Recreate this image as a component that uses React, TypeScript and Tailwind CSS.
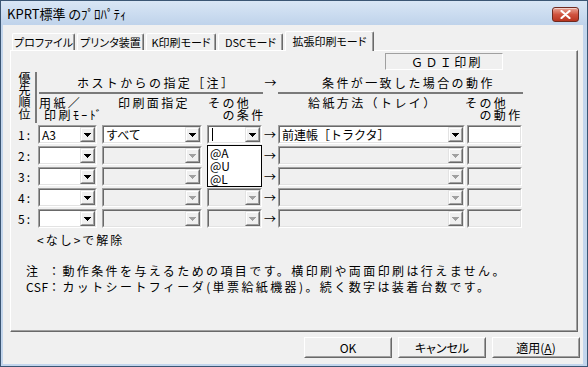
import React from "react";

const F = "font-['Noto_Sans_CJK_JP','Noto_Sans',sans-serif]";

function DropArrow({ disabled }: { disabled?: boolean }) {
  const c = disabled ? "#a0a0a0" : "#000000";
  return (
    <svg width="7" height="4" viewBox="0 0 7 4" shapeRendering="crispEdges">
      <rect x="0" y="0" width="7" height="1" fill={c} />
      <rect x="1" y="1" width="5" height="1" fill={c} />
      <rect x="2" y="2" width="3" height="1" fill={c} />
      <rect x="3" y="3" width="1" height="1" fill={c} />
    </svg>
  );
}

function Sunken({
  className,
  bg,
  children,
}: {
  className: string;
  bg: string;
  children?: React.ReactNode;
}) {
  return (
    <div
      className={`flex border border-t-[#a0a0a0] border-l-[#a0a0a0] border-r-white border-b-white ${className}`}
    >
      <div
        className={`flex min-w-0 flex-1 border border-t-[#696969] border-l-[#696969] border-r-[#e3e3e3] border-b-[#e3e3e3] ${bg}`}
      >
        {children}
      </div>
    </div>
  );
}

function DropBtn({ disabled }: { disabled?: boolean }) {
  return (
    <div className="flex h-full w-[15px] border border-t-[#e3e3e3] border-l-[#e3e3e3] border-r-[#696969] border-b-[#696969] bg-[#f0f0f0]">
      <div className="flex flex-1 items-center justify-center border border-t-white border-l-white border-r-[#a0a0a0] border-b-[#a0a0a0]">
        <DropArrow disabled={disabled} />
      </div>
    </div>
  );
}

function Combo({
  w,
  value,
  enabled,
  arrowEnabled,
  children,
}: {
  w: string;
  value?: React.ReactNode;
  enabled?: boolean;
  arrowEnabled?: boolean;
  children?: React.ReactNode;
}) {
  return (
    <div className={`relative ${w}`}>
      <Sunken className="h-[19px] w-full" bg={enabled ? "bg-white" : "bg-[#f0f0f0]"}>
        <div className="min-w-0 flex-1 overflow-hidden whitespace-nowrap pl-[2px] text-[12px] leading-[15px] text-black">
          {value}
        </div>
        <DropBtn disabled={!arrowEnabled} />
      </Sunken>
      {children}
    </div>
  );
}

function RowArrow() {
  return (
    <div className="w-[16px] text-center text-[12px] leading-[19px] text-black">→</div>
  );
}

function Row({ n, first }: { n: number; first?: boolean }) {
  return (
    <div className="flex h-[19px] items-center">
      <div className="w-[27px] pl-[7px] text-[12px] leading-[19px] tracking-[2px] text-black">
        {n}:
      </div>
      <Combo w="w-[59px]" enabled arrowEnabled value={first ? "A3" : ""} />
      <div className="ml-[5px]">
        <Combo w="w-[100px]" enabled={first} arrowEnabled={first} value={first ? "すべて" : ""} />
      </div>
      <div className="ml-[5px]">
        {first ? (
          <Combo
            w="w-[55px]"
            enabled
            arrowEnabled
            value={<span className="ml-[1px] mt-[1px] inline-block h-[13px] w-[1px] bg-black align-top" />}
          >
            <div className="absolute left-0 top-[20px] z-20 h-[42px] w-[55px] whitespace-pre border border-black bg-white pl-[2px] text-[12px] leading-[13px] text-black">
              {"@A\n@U\n@L"}
            </div>
          </Combo>
        ) : (
          <Combo w="w-[55px]" />
        )}
      </div>
      <RowArrow />
      <Combo
        w="w-[187px]"
        enabled={first}
        arrowEnabled={first}
        value={first ? "前連帳［トラクタ］" : ""}
      />
      <div className="ml-[2px]">
        <Sunken className="h-[19px] w-[55px]" bg={first ? "bg-white" : "bg-[#f0f0f0]"} />
      </div>
    </div>
  );
}

function PushButton({ children }: { children: React.ReactNode }) {
  return (
    <div className="flex h-[21px] w-[88px] border border-t-white border-l-white border-r-[#696969] border-b-[#696969] bg-[#f0f0f0]">
      <div className="flex flex-1 items-center justify-center border border-t-[#f0f0f0] border-l-[#f0f0f0] border-r-[#a0a0a0] border-b-[#a0a0a0] text-[12px] leading-[15px] text-black">
        {children}
      </div>
    </div>
  );
}

function Tab({ w, label, selected }: { w: string; label: string; selected?: boolean }) {
  if (selected) {
    return (
      <div
        className={`relative z-10 -mb-[1px] h-[20px] ${w} whitespace-nowrap rounded-t-[2px] border-l border-t border-r border-l-white border-t-white border-r-[#696969] bg-[#f0f0f0] pt-[4px] text-center text-[11px] leading-[11px] text-black shadow-[inset_-1px_0_0_#a0a0a0] [font-feature-settings:'palt']`}
      >
        {label}
      </div>
    );
  }
  return (
    <div
      className={`h-[17px] ${w} whitespace-nowrap rounded-t-[2px] border-l border-t border-r border-l-white border-t-white border-r-[#696969] bg-[#f0f0f0] pt-[3px] text-center text-[11px] leading-[11px] text-black shadow-[inset_-1px_0_0_#a0a0a0] [font-feature-settings:'palt']`}
    >
      {label}
    </div>
  );
}

export default function App() {
  return (
    <div
      className={`${F} flex h-[367px] w-[588px] flex-col overflow-hidden border border-[#3b5674] bg-[#c3d6ed] text-black`}
    >
      {/* Title bar */}
      <div className="flex h-[24px] shrink-0 items-start bg-gradient-to-b from-[#d9e6f5] to-[#bfd3eb]">
        <span className="ml-[6px] mt-[6px] text-[13px] leading-[13px] text-black [font-feature-settings:'palt']">
          KPRT標準 のﾌﾟﾛﾊﾟﾃｨ
        </span>
        <div className="ml-auto mr-[8px] mt-[6px] flex h-[15px] w-[27px] items-center justify-center rounded-[3px] border border-[#6f2a20] bg-gradient-to-b from-[#e8a597] via-[#d0533f] to-[#b8341f] shadow-[inset_0_1px_0_rgba(255,255,255,0.5)]">
          <svg width="11" height="9" viewBox="0 0 11 9">
            <path d="M1.5 1 L9.5 8 M9.5 1 L1.5 8" stroke="#ffffff" strokeWidth="2.2" strokeLinecap="round" />
          </svg>
        </div>
      </div>

      {/* Body */}
      <div className="ml-[2px] mr-[4px] flex h-[339px] w-[580px] shrink-0 flex-col bg-[#f0f0f0] pl-[7px] pt-[6px]">
        {/* Tabs */}
        <div className="flex h-[19px] items-end">
          <div className="ml-[2px]">
            <Tab w="w-[63px]" label="プロファイル" />
          </div>
          <div className="ml-[2px]">
            <Tab w="w-[67px]" label="プリンタ装置" />
          </div>
          <div className="ml-[2px]">
            <Tab w="w-[70px]" label="K印刷モード" />
          </div>
          <div className="ml-[2px]">
            <Tab w="w-[65px]" label="DSCモード" />
          </div>
          <div className="ml-[2px] flex items-end">
            <Tab w="w-[89px]" label="拡張印刷モード" selected />
          </div>
        </div>

        {/* Panel */}
        <div className="flex h-[282px] w-[568px] flex-col border-l border-t border-r border-b border-l-white border-t-white border-r-[#696969] border-b-[#696969] shadow-[inset_-1px_-1px_0_#a0a0a0] text-[12px] leading-[12px] tracking-[2.4px]">
          {/* GDI box */}
          <div className="ml-[374px] mt-[2px] h-[17px] w-[118px] border border-t-[#a0a0a0] border-l-[#a0a0a0] border-r-white border-b-white pl-[25px] text-[12px] leading-[15px]">
            ＧＤＩ印刷
          </div>

          {/* Header block */}
          <div className="mt-[2px] flex">
            <div className="ml-[6px] h-[48px] w-[15px] text-[12px] leading-[15px] tracking-normal [writing-mode:vertical-rl]">
              優先順位
            </div>
            <div className="ml-[3px] h-[51px] w-[2px] bg-[#7a7a7a]" />
            <div className="flex flex-col">
              {/* section titles */}
              <div className="flex">
                <div className="ml-[2px] flex w-[224px] flex-col">
                  <div className="pl-[38px] pt-[5px] leading-[12px]">ホストからの指定［注］</div>
                  <div className="mt-[3px] h-[2px] bg-[#7a7a7a]" />
                </div>
                <div className="w-[15px] pt-[5px] text-center leading-[12px] tracking-normal">→</div>
                <div className="flex w-[245px] flex-col">
                  <div className="pl-[44px] pt-[5px] leading-[12px]">条件が一致した場合の動作</div>
                  <div className="mt-[3px] h-[2px] bg-[#7a7a7a]" />
                </div>
              </div>
              {/* column headers */}
              <div className="mt-[3px] flex leading-[12px]">
                <div className="ml-[2px] w-[79px] whitespace-pre">{"用紙／\n 印刷ﾓｰﾄﾞ"}</div>
                <div className="w-[90px]">印刷面指定</div>
                <div className="w-[100px] whitespace-pre">{"その他\n　の条件"}</div>
                <div className="w-[157px]">給紙方法（トレイ）</div>
                <div className="whitespace-pre">{"その他\n　の動作"}</div>
              </div>
            </div>
          </div>

          {/* Rows */}
          <div className="mt-[2px] flex flex-col gap-[2px] tracking-normal">
            <Row n={1} first />
            <Row n={2} />
            <Row n={3} />
            <Row n={4} />
            <Row n={5} />
          </div>

          <div className="mt-[6px] pl-[26px] leading-[12px] tracking-[2px]">&lt;なし&gt;で解除</div>

          <div className="mt-[17px] flex flex-col pl-[15px] leading-[16px]">
            <div className="flex">
              <span className="w-[22px]">注</span>
              <span>：動作条件を与えるための項目です。横印刷や両面印刷は行えません。</span>
            </div>
            <div className="flex">
              <span className="w-[22px] tracking-[0.5px]">CSF</span>
              <span>：カットシートフィーダ(単票給紙機器)。続く数字は装着台数です。</span>
            </div>
          </div>
        </div>

        {/* Buttons */}
        <div className="mt-[5px] flex justify-end gap-[6px] pr-[3px]">
          <PushButton>OK</PushButton>
          <PushButton>
            <span className="[font-feature-settings:'palt']">キャンセル</span>
          </PushButton>
          <PushButton>
            <span>
              適用(<span className="underline">A</span>)
            </span>
          </PushButton>
        </div>
      </div>
    </div>
  );
}
